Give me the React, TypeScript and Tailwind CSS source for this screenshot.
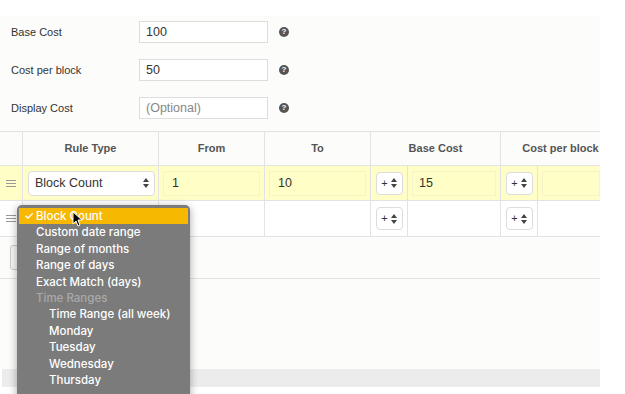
import React from "react";

const Help = () => (
  <div className="ml-[11px] w-[10px] h-[10px] rounded-full bg-[#555] text-white text-[8px] leading-[10px] font-bold flex items-center justify-center">?</div>
);

const Handle = () => (
  <div className="flex flex-col gap-[2px] w-[10px]">
    <div className="h-[1px] bg-[#999]" />
    <div className="h-[1px] bg-[#999]" />
    <div className="h-[1px] bg-[#999]" />
  </div>
);

const Updown = () => (
  <svg width="6" height="10" viewBox="0 0 6 10">
    <path d="M3 0 L6 4 L0 4 Z" fill="#444" />
    <path d="M3 10 L6 6 L0 6 Z" fill="#444" />
  </svg>
);

const SmallSelect = () => (
  <div className="w-[27px] h-[23px] bg-white border border-[#ddd] rounded-[4px] flex items-center justify-center gap-[3px] text-[11px] text-[#333]">
    <span>+</span>
    <Updown />
  </div>
);

const FieldRow = ({ label, value, placeholder }: { label: string; value?: string; placeholder?: string }) => (
  <div className="flex items-center h-[22px]">
    <div className="w-[139px] pl-[11px] text-[11px] text-[#333]">{label}</div>
    <div className="w-[129px] h-[22px] border border-[#ddd] bg-white flex items-center px-[6px] text-[12.5px]">
      {value ? <span className="text-[#333]">{value}</span> : <span className="text-[#888]">{placeholder}</span>}
    </div>
    <Help />
  </div>
);

const menuItems: { t: string; kind: "sel" | "n" | "dis" | "ind" }[] = [
  { t: "Block Count", kind: "sel" },
  { t: "Custom date range", kind: "n" },
  { t: "Range of months", kind: "n" },
  { t: "Range of days", kind: "n" },
  { t: "Exact Match (days)", kind: "n" },
  { t: "Time Ranges", kind: "dis" },
  { t: "Time Range (all week)", kind: "ind" },
  { t: "Monday", kind: "ind" },
  { t: "Tuesday", kind: "ind" },
  { t: "Wednesday", kind: "ind" },
  { t: "Thursday", kind: "ind" },
];

export default function App() {
  return (
    <div className="w-[625px] h-[394px] bg-white relative overflow-hidden font-['Liberation_Sans',Arial,sans-serif]">
      <div className="h-[16px]" />
      <div className="w-[600px] h-[353px] bg-[#fcfcfa] flex flex-col">
        <div className="mt-[5px] flex flex-col gap-[16px]">
          <FieldRow label="Base Cost" value="100" />
          <FieldRow label="Cost per block" value="50" />
          <FieldRow label="Display Cost" placeholder="(Optional)" />
        </div>
        {/* table */}
        <div className="mt-[12px] border-t border-[#e3e3e3] flex flex-col">
          <div className="flex h-[34px] border-b border-[#e3e3e3] text-[11px] font-bold text-[#555]">
            <div className="w-[23px] border-r border-[#e3e3e3]" />
            <div className="w-[136px] border-r border-[#e3e3e3] flex items-center justify-center">Rule Type</div>
            <div className="w-[106px] border-r border-[#e3e3e3] flex items-center justify-center">From</div>
            <div className="w-[106px] border-r border-[#e3e3e3] flex items-center justify-center">To</div>
            <div className="w-[130px] border-r border-[#e3e3e3] flex items-center justify-center">Base Cost</div>
            <div className="w-[99px] flex items-center justify-center whitespace-nowrap overflow-hidden pl-[20px]">Cost per block</div>
          </div>
          {/* row 1 */}
          <div className="flex h-[35px] border-b border-[#e3e3e3] bg-[#fffec6] text-[12.5px] text-[#333]">
            <div className="w-[23px] border-r border-[#e3e3e3] flex items-center justify-center"><Handle /></div>
            <div className="w-[136px] border-r border-[#e3e3e3] flex items-center pl-[5px]">
              <div className="w-[127px] h-[25px] bg-white border border-[#ddd] rounded-[4px] flex items-center justify-between pl-[6px] pr-[5px]">
                <span>Block Count</span>
                <Updown />
              </div>
            </div>
            <div className="w-[106px] border-r border-[#e3e3e3] flex items-center px-[4px]">
              <div className="w-full h-[25px] border border-[#f6f4c4] flex items-center px-[8px]">1</div>
            </div>
            <div className="w-[106px] border-r border-[#e3e3e3] flex items-center px-[4px]">
              <div className="w-full h-[25px] border border-[#f6f4c4] flex items-center px-[8px]">10</div>
            </div>
            <div className="w-[37px] border-r border-[#e3e3e3] flex items-center justify-center"><SmallSelect /></div>
            <div className="w-[93px] border-r border-[#e3e3e3] flex items-center px-[4px]">
              <div className="w-full h-[25px] border border-[#f6f4c4] flex items-center px-[6px]">15</div>
            </div>
            <div className="w-[37px] border-r border-[#e3e3e3] flex items-center justify-center"><SmallSelect /></div>
            <div className="w-[62px] flex items-center pl-[4px]">
              <div className="w-full h-[25px] border border-[#f6f4c4]" />
            </div>
          </div>
          {/* row 2 */}
          <div className="flex h-[36px] border-b border-[#e3e3e3] bg-white text-[12.5px] text-[#333]">
            <div className="w-[23px] border-r border-[#e3e3e3] flex items-center justify-center"><Handle /></div>
            <div className="w-[136px] border-r border-[#e3e3e3]" />
            <div className="w-[106px] border-r border-[#e3e3e3]" />
            <div className="w-[106px] border-r border-[#e3e3e3]" />
            <div className="w-[37px] border-r border-[#e3e3e3] flex items-center justify-center"><SmallSelect /></div>
            <div className="w-[93px] border-r border-[#e3e3e3]" />
            <div className="w-[37px] border-r border-[#e3e3e3] flex items-center justify-center"><SmallSelect /></div>
            <div className="w-[62px]" />
          </div>
          {/* footer with add button (hidden under menu) */}
          <div className="h-[42px] border-b border-[#e3e3e3] flex items-center pl-[10px]">
            <div className="h-[25px] w-[60px] border border-[#ccc] rounded-[3px] bg-[#f7f7f7]" />
          </div>
        </div>
      </div>
      <div className="ml-[2px] w-[598px] h-[18px] bg-[#ececec]" />

      {/* dropdown menu */}
      <div className="absolute left-[17px] top-[205px] w-[173px] h-[200px] bg-[#7b7b7b] rounded-t-[5px] shadow-[0_2px_8px_rgba(0,0,0,0.35)] pt-[3px] px-[2px] font-['Inter',sans-serif] text-[11.5px] font-medium">
        {menuItems.map((m) => (
          <div
            key={m.t}
            className={
              "h-[16.4px] leading-[16.4px] whitespace-nowrap " +
              (m.kind === "sel"
                ? "bg-[#f6b800] text-white pl-[5px]"
                : m.kind === "dis"
                ? "text-[#a9a9a9] pl-[17px]"
                : m.kind === "ind"
                ? "text-white pl-[30px]"
                : "text-white pl-[17px]")
            }
          >
            {m.kind === "sel" ? <span className="inline-block w-[12px]">✓</span> : null}
            {m.t}
          </div>
        ))}
      </div>
      {/* cursor */}
      <svg className="absolute left-[72px] top-[211px]" width="11" height="16" viewBox="0 0 11 16">
        <path d="M1 1 L1 13 L4 10 L6 15 L8 14 L6 9 L10 9 Z" fill="#000" stroke="#fff" strokeWidth="1" />
      </svg>
    </div>
  );
}
